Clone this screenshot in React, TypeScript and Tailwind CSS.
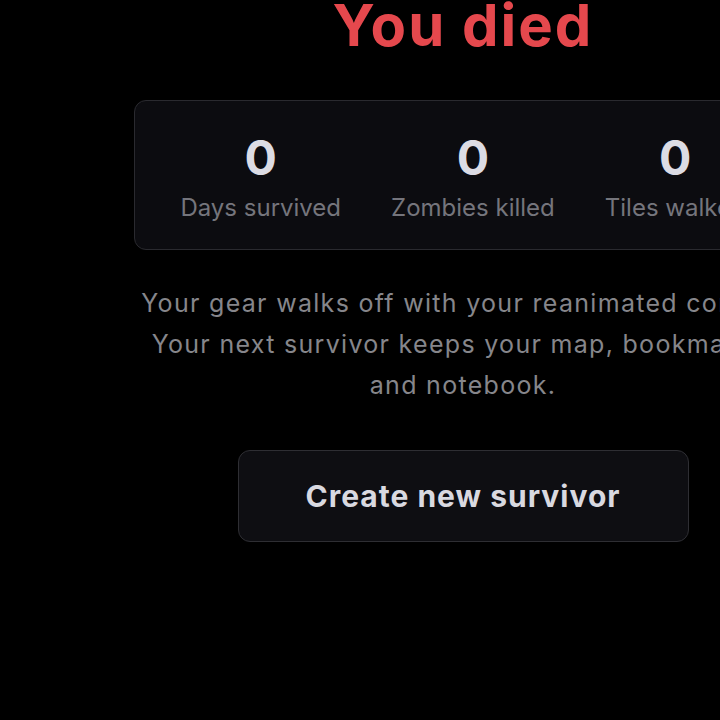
import React from 'react';

const stats = [
  { value: 0, label: 'Days survived' },
  { value: 0, label: 'Zombies killed' },
  { value: 0, label: 'Tiles walked' },
];

export default function App() {
  return (
    <div className="w-full h-screen overflow-hidden bg-black" style={{ fontFamily: 'Inter, "Noto Sans", sans-serif' }}>
      <div className="w-[926px] flex flex-col items-center">
        <h1 className="mt-[-13px] text-[58px] leading-[76px] font-bold text-[#e5484d] tracking-[2px]">You died</h1>

        <div className="mt-[37px] w-[658px] h-[150px] rounded-xl border border-[#2a2a2f] bg-[#0c0c10] flex justify-center items-start pt-[31px] gap-[50px]">
          {stats.map((s) => (
            <div key={s.label} className="flex flex-col items-center">
              <span className="text-[48px] leading-[52px] font-bold text-[#dcdce4]">{s.value}</span>
              <span className="mt-[9px] text-[24px] leading-[30px] text-[#75757c]">{s.label}</span>
            </div>
          ))}
        </div>

        <p className="mt-[33px] w-[680px] text-center text-[25px] leading-[41px] tracking-[1.3px] text-[#86868b]">
          Your gear walks off with your reanimated corpse.
          <br />
          Your next survivor keeps your map, bookmarks,
          <br />
          and notebook.
        </p>

        <button className="mt-[44px] w-[451px] h-[92px] rounded-xl border border-[#2e2e33] bg-[#0e0e12] text-[30px] tracking-[1px] font-bold text-[#d9d9e0]">
          Create new survivor
        </button>
      </div>
    </div>
  );
}
